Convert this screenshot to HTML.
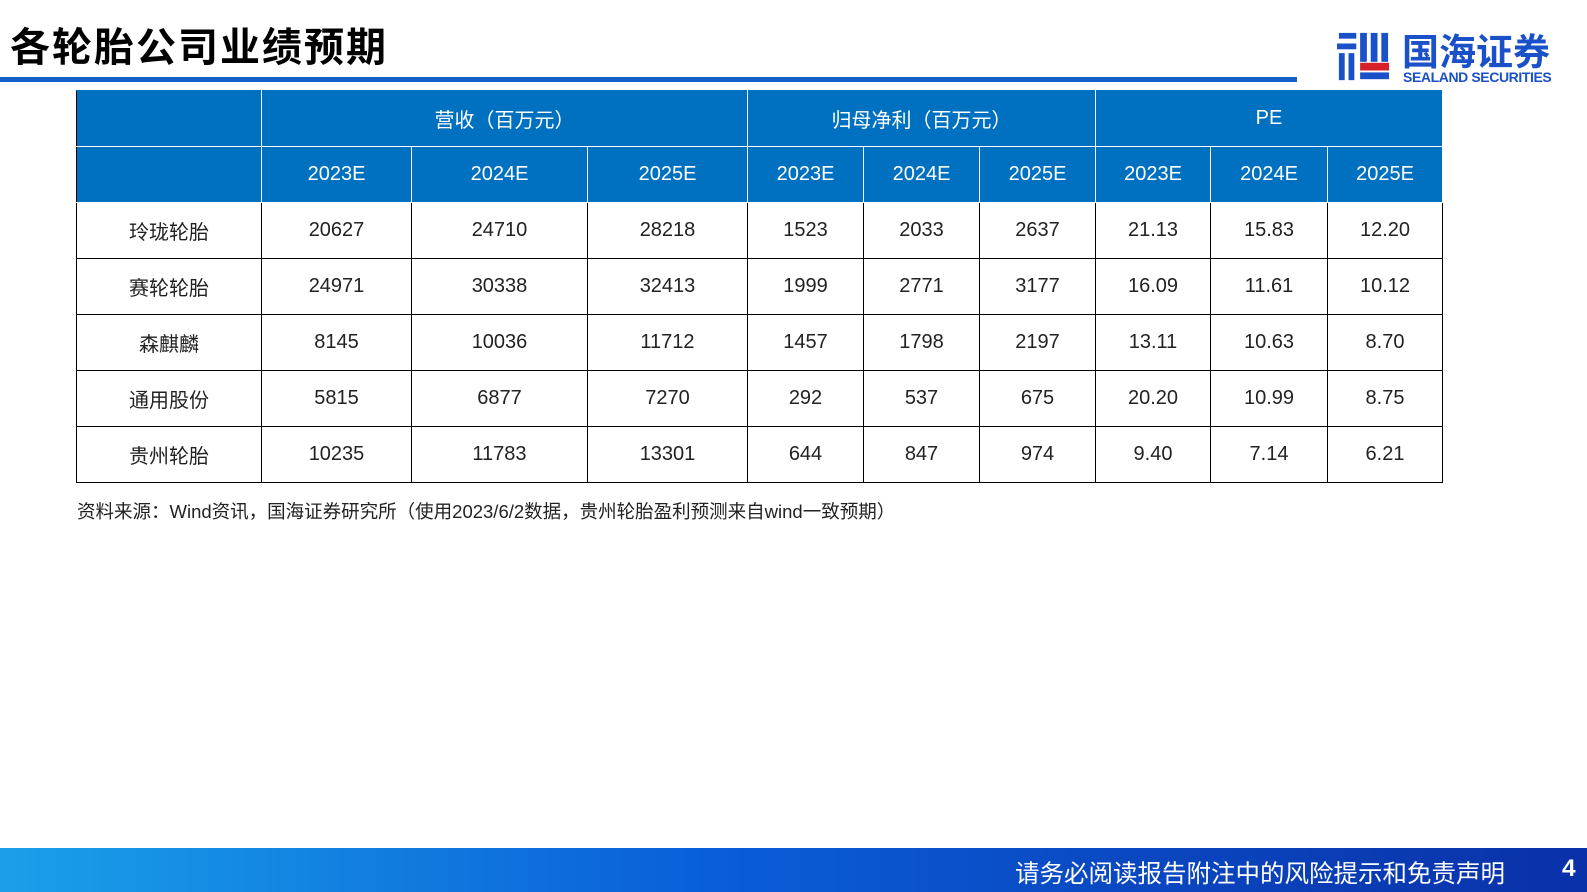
<!DOCTYPE html>
<html><head><meta charset="utf-8"><style>
body{margin:0;width:1587px;height:892px;position:relative;background:#fff;font-family:"Liberation Sans","Noto Sans CJK SC",sans-serif;overflow:hidden}
.title{position:absolute;left:10px;top:15px;font-size:40px;font-weight:bold;color:#000;letter-spacing:2px}
.line{position:absolute;left:0;top:77px;width:1297px;height:5px;background:#1560c8}
table{position:absolute;left:76px;top:90px;border-collapse:collapse;font-size:20px;table-layout:fixed}
td{text-align:center;height:55px;border:1px solid #000;color:#222;padding:0}
tr.h td{background:#0070c0;color:#fff;border:1px solid #fff;border-top:1px solid #0070c0}
tr.h td:first-child{border-left:1px solid #000}
.src{position:absolute;left:77px;top:498px;font-size:18.5px;color:#222}
.foot{position:absolute;left:0;top:848px;width:1587px;height:44px;background:linear-gradient(90deg,#1aa0e8,#0a5ed8 45%,#0a30a8)}
.foot span{position:absolute;color:#fff;font-size:24.5px;top:7px}
</style></head><body>
<div class="title">各轮胎公司业绩预期</div>
<div class="line"></div>
<svg style="position:absolute;left:1336px;top:30px" width="55" height="54" viewBox="0 0 55 56">
<g fill="#1a50c8"><rect x="2" y="3" width="18" height="6"/><rect x="0" y="14" width="20" height="6"/><rect x="2" y="24" width="6" height="28"/><rect x="12" y="24" width="6" height="28"/><rect x="24" y="3" width="7" height="30"/><rect x="35" y="3" width="7" height="30"/><rect x="46" y="3" width="7" height="30"/><rect x="24" y="44" width="30" height="7"/></g>
<rect x="24" y="34" width="30" height="8" fill="#d8202a"/></svg>
<div style="position:absolute;left:1402px;top:28px;font-size:37px;font-weight:bold;color:#1a50c8;font-family:'Noto Sans CJK SC',sans-serif;line-height:42px">国海证券</div>
<div style="position:absolute;left:1403px;top:69px;font-size:14px;font-weight:bold;color:#1a50c8;letter-spacing:-0.4px">SEALAND SECURITIES</div>
<table>
<colgroup><col style="width:185px"><col style="width:150px"><col style="width:176px"><col style="width:160px"><col style="width:116px"><col style="width:116px"><col style="width:116px"><col style="width:115px"><col style="width:117px"><col style="width:115px"></colgroup>
<tr class="h"><td></td><td colspan="3">营收（百万元）</td><td colspan="3">归母净利（百万元）</td><td colspan="3">PE</td></tr>
<tr class="h"><td></td><td>2023E</td><td>2024E</td><td>2025E</td><td>2023E</td><td>2024E</td><td>2025E</td><td>2023E</td><td>2024E</td><td>2025E</td></tr>
<tr><td>玲珑轮胎</td><td>20627</td><td>24710</td><td>28218</td><td>1523</td><td>2033</td><td>2637</td><td>21.13</td><td>15.83</td><td>12.20</td></tr>
<tr><td>赛轮轮胎</td><td>24971</td><td>30338</td><td>32413</td><td>1999</td><td>2771</td><td>3177</td><td>16.09</td><td>11.61</td><td>10.12</td></tr>
<tr><td>森麒麟</td><td>8145</td><td>10036</td><td>11712</td><td>1457</td><td>1798</td><td>2197</td><td>13.11</td><td>10.63</td><td>8.70</td></tr>
<tr><td>通用股份</td><td>5815</td><td>6877</td><td>7270</td><td>292</td><td>537</td><td>675</td><td>20.20</td><td>10.99</td><td>8.75</td></tr>
<tr><td>贵州轮胎</td><td>10235</td><td>11783</td><td>13301</td><td>644</td><td>847</td><td>974</td><td>9.40</td><td>7.14</td><td>6.21</td></tr>
</table>
<div class="src">资料来源：Wind资讯，国海证券研究所（使用2023/6/2数据，贵州轮胎盈利预测来自wind一致预期）</div>
<div class="foot"><span style="left:1015px">请务必阅读报告附注中的风险提示和免责声明</span><span style="left:1562px;font-weight:bold">4</span></div>
</body></html>
